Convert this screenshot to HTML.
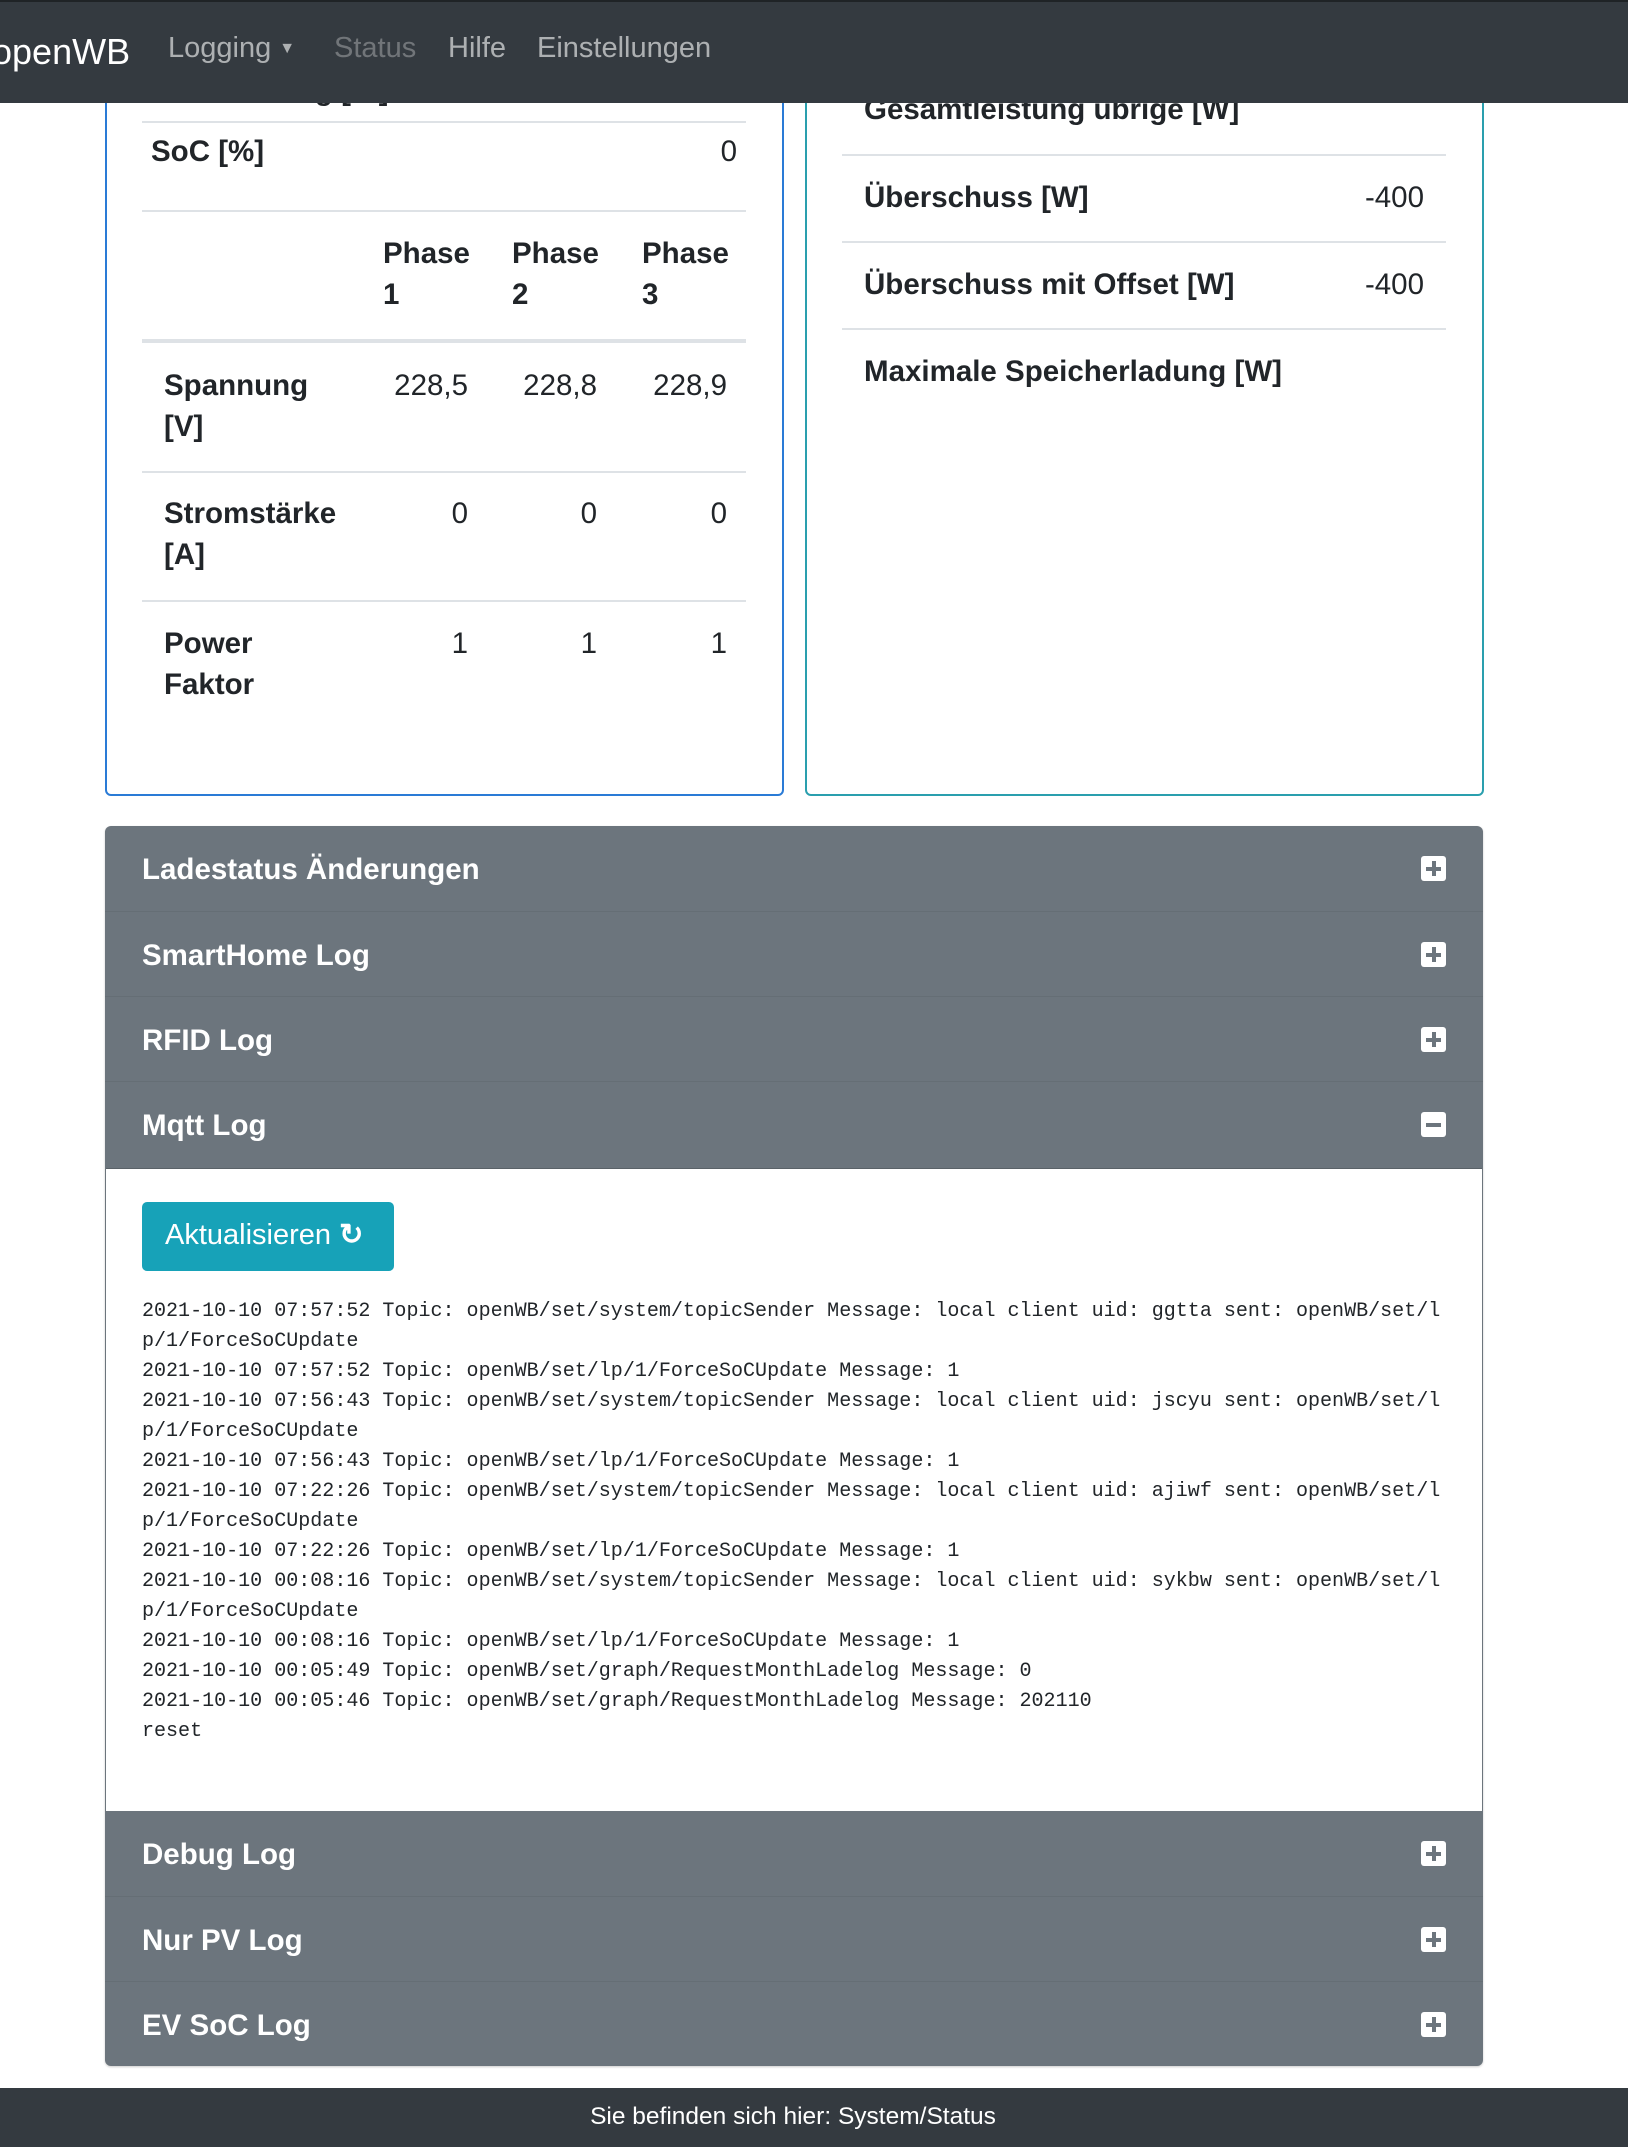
<!DOCTYPE html>
<html><head><meta charset="utf-8">
<style>
*{box-sizing:border-box;margin:0;padding:0}
body{width:1628px;height:2147px;position:relative;overflow:hidden;background:#fff;font-family:"Liberation Sans",Arial,sans-serif;color:#212529}
.a{position:absolute;white-space:nowrap;line-height:41px}
.b{font-weight:bold;font-size:29.5px}
.n{font-size:29.5px}
.nav{position:absolute;left:0;top:0;width:1628px;height:103px;background:#343a40;border-top:2px solid #1f2326;z-index:5}
.nav span{position:absolute;top:30px;font-size:29px;color:rgba(255,255,255,.6)}
.card{position:absolute;top:-20px;border:2px solid #2a7bd6;border-radius:6px}
.line{position:absolute;height:2px;background:#dee2e6}
.acc{position:absolute;left:105px;top:826px;width:1378px;height:1240px;border-radius:6px;background:#6c757d;box-shadow:0 1px 2px rgba(0,0,0,.2);overflow:hidden}
.h{position:absolute;left:0;width:1378px;height:85px;border-top:1px solid rgba(0,0,0,.06)}
.h .t{position:absolute;left:37px;top:23px;line-height:41px;font-size:29.5px;font-weight:bold;color:#fff}
.ic{position:absolute;left:1316px;top:30px;width:25px;height:25px;background:#fff;border-radius:3px}
.ic:before{content:"";position:absolute;left:5px;top:10.5px;width:15px;height:4px;background:#6c757d}
.ic.p:after{content:"";position:absolute;left:10.5px;top:5px;width:4px;height:15px;background:#6c757d}
pre{position:absolute;left:37px;top:470px;font-family:"Liberation Mono",monospace;font-size:20.05px;line-height:30px;color:#212529}
</style></head><body>
<div class="nav">
<span style="left:-8px;top:29px;font-size:36px;color:#fff">openWB</span>
<span style="left:168px">Logging <span style="position:static;font-size:16px;vertical-align:4px">▼</span></span>
<span style="left:334px;color:rgba(255,255,255,.3)">Status</span>
<span style="left:448px">Hilfe</span>
<span style="left:537px">Einstellungen</span>
</div>

<div class="card" style="left:105px;width:679px;height:816px"></div>
<div class="card" style="left:805px;width:679px;height:816px;border-color:#2a9fae"></div>

<div class="a b" style="left:151px;top:70px">Ladeleistung [W]</div>
<div class="line" style="left:142px;top:121px;width:604px"></div>
<div class="a b" style="left:151px;top:131px">SoC [%]</div>
<div class="a n" style="right:891px;top:131px">0</div>
<div class="line" style="left:142px;top:210px;width:604px"></div>
<div class="a b" style="left:383px;top:233px">Phase<br>1</div>
<div class="a b" style="left:512px;top:233px">Phase<br>2</div>
<div class="a b" style="left:642px;top:233px">Phase<br>3</div>
<div class="line" style="left:142px;top:339px;width:604px;height:4px"></div>
<div class="a b" style="left:164px;top:365px">Spannung<br>[V]</div>
<div class="a n" style="right:1160px;top:365px">228,5</div>
<div class="a n" style="right:1031px;top:365px">228,8</div>
<div class="a n" style="right:901px;top:365px">228,9</div>
<div class="line" style="left:142px;top:471px;width:604px"></div>
<div class="a b" style="left:164px;top:493px">Stromstärke<br>[A]</div>
<div class="a n" style="right:1160px;top:493px">0</div>
<div class="a n" style="right:1031px;top:493px">0</div>
<div class="a n" style="right:901px;top:493px">0</div>
<div class="line" style="left:142px;top:600px;width:604px"></div>
<div class="a b" style="left:164px;top:623px">Power<br>Faktor</div>
<div class="a n" style="right:1160px;top:623px">1</div>
<div class="a n" style="right:1031px;top:623px">1</div>
<div class="a n" style="right:901px;top:623px">1</div>

<div class="a b" style="left:864px;top:89px">Gesamtleistung übrige [W]</div>
<div class="line" style="left:842px;top:154px;width:604px"></div>
<div class="a b" style="left:864px;top:177px">Überschuss [W]</div>
<div class="a n" style="right:204px;top:177px">-400</div>
<div class="line" style="left:842px;top:241px;width:604px"></div>
<div class="a b" style="left:864px;top:264px">Überschuss mit Offset [W]</div>
<div class="a n" style="right:204px;top:264px">-400</div>
<div class="line" style="left:842px;top:328px;width:604px"></div>
<div class="a b" style="left:864px;top:351px">Maximale Speicherladung [W]</div>

<div class="acc">
<div class="h" style="top:0;border-top:none"><div class="t">Ladestatus Änderungen</div><div class="ic p"></div></div>
<div class="h" style="top:85px"><div class="t">SmartHome Log</div><div class="ic p"></div></div>
<div class="h" style="top:170px"><div class="t">RFID Log</div><div class="ic p"></div></div>
<div class="h" style="top:255px"><div class="t">Mqtt Log</div><div class="ic"></div></div>
<div style="position:absolute;left:1px;top:342px;width:1376px;height:643px;background:#fff;border-top:1px solid #5a6268">
<div style="position:absolute;left:36px;top:33px;width:252px;height:69px;background:#17a2b8;border-radius:5px;color:#fff;font-size:29px;padding:15px 0 0 23px;white-space:nowrap">Aktualisieren <span style="font-weight:bold">↻</span></div>
<pre style="left:36px;top:128px">2021-10-10 07:57:52 Topic: openWB/set/system/topicSender Message: local client uid: ggtta sent: openWB/set/l
p/1/ForceSoCUpdate
2021-10-10 07:57:52 Topic: openWB/set/lp/1/ForceSoCUpdate Message: 1
2021-10-10 07:56:43 Topic: openWB/set/system/topicSender Message: local client uid: jscyu sent: openWB/set/l
p/1/ForceSoCUpdate
2021-10-10 07:56:43 Topic: openWB/set/lp/1/ForceSoCUpdate Message: 1
2021-10-10 07:22:26 Topic: openWB/set/system/topicSender Message: local client uid: ajiwf sent: openWB/set/l
p/1/ForceSoCUpdate
2021-10-10 07:22:26 Topic: openWB/set/lp/1/ForceSoCUpdate Message: 1
2021-10-10 00:08:16 Topic: openWB/set/system/topicSender Message: local client uid: sykbw sent: openWB/set/l
p/1/ForceSoCUpdate
2021-10-10 00:08:16 Topic: openWB/set/lp/1/ForceSoCUpdate Message: 1
2021-10-10 00:05:49 Topic: openWB/set/graph/RequestMonthLadelog Message: 0
2021-10-10 00:05:46 Topic: openWB/set/graph/RequestMonthLadelog Message: 202110
reset</pre>
</div>
<div class="h" style="top:985px;border-top:none"><div class="t">Debug Log</div><div class="ic p"></div></div>
<div class="h" style="top:1070px"><div class="t">Nur PV Log</div><div class="ic p"></div></div>
<div class="h" style="top:1155px"><div class="t">EV SoC Log</div><div class="ic p"></div></div>
</div>

<div style="position:absolute;left:0;top:2088px;width:1628px;height:59px;background:#343a40;color:#fff;font-size:24.5px;text-align:center;padding-top:15px;padding-right:42px">Sie befinden sich hier: System/Status</div>
</body></html>
